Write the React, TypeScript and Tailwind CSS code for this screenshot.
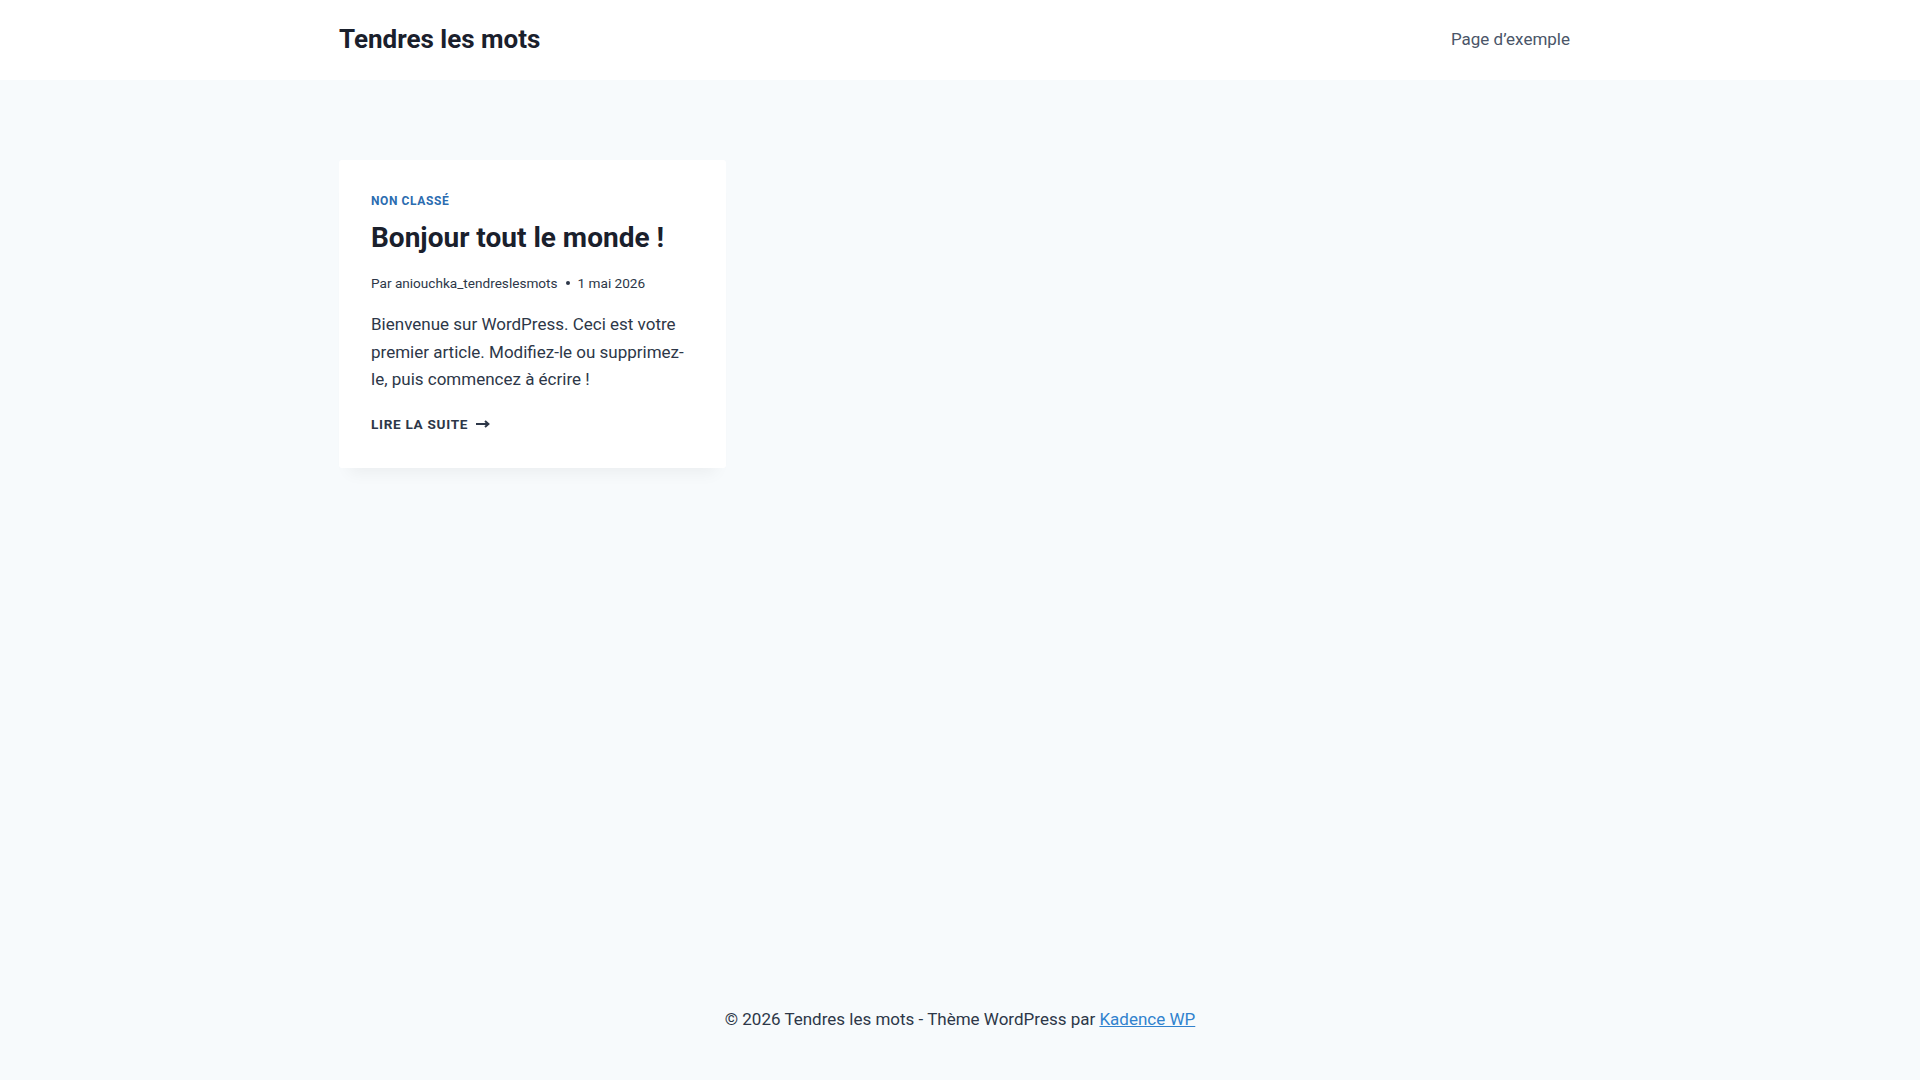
export default function App() {
  return (
    <div className="min-h-screen flex flex-col bg-[#f7fafc] text-[#2d3748] font-['Roboto',sans-serif]">
      <header className="bg-white h-[80px]">
        <div className="max-w-[1290px] mx-auto px-6 h-full flex items-center justify-between">
          <a href="#" className="text-[26px] font-bold text-[#1a202c] leading-none pb-[2px]">
            Tendres les mots
          </a>
          <nav>
            <a href="#" className="block px-3 pr-[11px] text-[17px] leading-[24px] text-[#4a5568] pb-[3px]">
              Page d’exemple
            </a>
          </nav>
        </div>
      </header>

      <main className="flex-1 pt-[80px]">
        <div className="max-w-[1290px] mx-auto px-6 grid grid-cols-3 gap-10">
          <article className="bg-white rounded-[3px] px-8 pt-[32px] pb-[34px] shadow-[0px_15px_15px_-10px_rgba(0,0,0,0.05)]">
            <div className="text-[12px] font-bold uppercase tracking-[0.05em] text-[#2b6cb0] leading-[20px] mt-[-1px]">
              Non classé
            </div>
            <h2 className="mt-[9px] text-[28px] font-bold text-[#1a202c] leading-[36px]">
              Bonjour tout le monde !
            </h2>
            <div className="mt-[17px] flex items-center text-[13.6px] text-[#2d3748] leading-[20px]">
              <span>Par aniouchka_tendreslesmots</span>
              <span className="mx-[8px] w-[4px] h-[4px] rounded-full bg-[#2d3748]"></span>
              <span>1 mai 2026</span>
            </div>
            <p className="mt-[18px] text-[17px] leading-[27.5px] text-[#2d3748]">
              Bienvenue sur WordPress. Ceci est votre premier article. Modifiez-le ou supprimez-le, puis commencez à écrire !
            </p>
            <a href="#" className="mt-[20px] flex items-center text-[13.6px] font-bold uppercase tracking-[0.05em] text-[#2d3748] leading-[20px]">
              Lire la suite
              <svg className="ml-[8px]" width="14" height="8" viewBox="0 0 14 8" fill="none">
                <path d="M0 4h12" stroke="#2d3748" strokeWidth="2" />
                <path d="M9 1l3.4 3-3.4 3" stroke="#2d3748" strokeWidth="2" fill="none" />
              </svg>
            </a>
          </article>
        </div>
      </main>

      <footer className="pt-[30px] pb-[47px]">
        <p className="text-center text-[17px] leading-[27px] text-[#2d3748]">
          © 2026 Tendres les mots - Thème WordPress par{" "}
          <a href="#" className="text-[#3182ce] underline">
            Kadence WP
          </a>
        </p>
      </footer>
    </div>
  );
}
